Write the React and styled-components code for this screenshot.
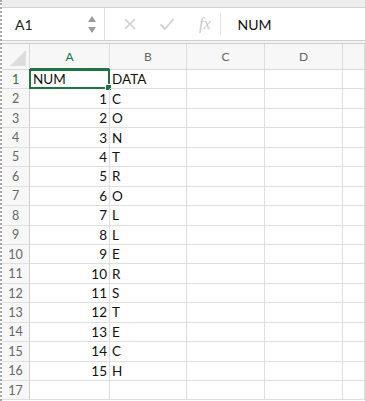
import React from "react"
import styled, { createGlobalStyle } from "styled-components"

const Global = createGlobalStyle`
  body {
    margin: 0;
    background: #fff;
    font-family: Lato, "Liberation Sans", sans-serif;
  }
`

const Frame = styled.div`
  width: 365px;
  height: 401px;
  overflow: hidden;
  display: flex;
  flex-direction: column;
  border-left: 2px dotted #a8a8a8;
  box-sizing: border-box;
  background: #fff;
`

const TopBand = styled.div`
  height: 7px;
  flex: none;
  background: #ededed;
  border-bottom: 1px solid #d4d4d4;
`

const FormulaBar = styled.div`
  height: 32px;
  flex: none;
  display: flex;
  align-items: center;
  background: #fff;
`

const NameBox = styled.div`
  width: 103px;
  height: 100%;
  box-sizing: border-box;
  display: flex;
  align-items: center;
  justify-content: space-between;
  padding: 0 8px 0 13px;
  border-right: 1px solid #dedede;
  font-size: 14px;
  color: #222;
`

const Spinner = styled.div`
  display: flex;
  flex-direction: column;
  gap: 5px;
  align-items: center;
`

const Arrow = styled.div`
  width: 0;
  height: 0;
  border-left: 4px solid transparent;
  border-right: 4px solid transparent;
  ${({ down }) =>
    down ? "border-top: 6px solid #9a9a9a;" : "border-bottom: 6px solid #9a9a9a;"}
`

const Tools = styled.div`
  display: flex;
  align-items: center;
  gap: 22px;
  padding: 0 10px 0 18px;
  height: 100%;
  color: #cfcfcf;
`

const Fx = styled.span`
  font-family: "Liberation Serif", serif;
  font-style: italic;
  font-size: 16px;
  color: #c8c8c8;
  padding: 0 9px 0 2px;
  border-right: 1px solid #e2e2e2;
  line-height: 22px;
`

const FormulaText = styled.div`
  padding-left: 7px;
  font-size: 14px;
  color: #111;
`

const Divider = styled.div`
  height: 2px;
  flex: none;
  border-top: 1px solid #cfcfcf;
  border-bottom: 1px solid #cfcfcf;
  background: #f4f4f4;
`

const Sheet = styled.div`
  display: grid;
  grid-template-columns: 28px 80px 77px 78px 78px 1fr;
  grid-template-rows: 26px repeat(17, 19.45px);
  flex: none;
`

const Corner = styled.div`
  position: relative;
  background: #f7f7f7;
  border-right: 1px solid #d8d8d8;
  border-bottom: 1px solid #d8d8d8;
  &::after {
    content: "";
    position: absolute;
    right: 3px;
    bottom: 3px;
    border-left: 16px solid transparent;
    border-bottom: 16px solid #dcdcdc;
  }
`

const ColHead = styled.div`
  display: flex;
  align-items: center;
  justify-content: center;
  background: #f7f7f7;
  border-right: 1px solid #dcdcdc;
  border-bottom: ${({ active }) => (active ? "2px solid #217346" : "1px solid #d8d8d8")};
  font-size: 12px;
  color: ${({ active }) => (active ? "#217346" : "#666")};
`

const RowHead = styled.div`
  display: flex;
  align-items: center;
  justify-content: center;
  background: #f7f7f7;
  border-right: 1px solid #d0d0d0;
  border-bottom: 1px solid #e0e0e0;
  font-size: 12.5px;
  color: ${({ active }) => (active ? "#217346" : "#666")};
`

const Cell = styled.div`
  position: relative;
  display: flex;
  align-items: center;
  justify-content: ${({ num }) => (num ? "flex-end" : "flex-start")};
  padding: 0 2px;
  border-right: 1px solid #dedede;
  border-bottom: 1px solid #dedede;
  font-size: 13.5px;
  color: #111;
  box-sizing: border-box;
  ${({ selected }) =>
    selected &&
    `
    border: 2px solid #217346;
    margin: -1px 0 0 -1px;
    &::after {
      content: "";
      position: absolute;
      right: -4px;
      bottom: -4px;
      width: 5px;
      height: 5px;
      background: #217346;
      border: 1px solid #fff;
    }
  `}
`

const letters = ["C", "O", "N", "T", "R", "O", "L", "L", "E", "R", "S", "T", "E", "C", "H"]
const cols = ["A", "B", "C", "D", ""]

const XIcon = () => (
  <svg width="14" height="14" viewBox="0 0 14 14">
    <path d="M2 2 L12 12 M12 2 L2 12" stroke="#cfcfcf" strokeWidth="1.6" fill="none" />
  </svg>
)

const CheckIcon = () => (
  <svg width="16" height="14" viewBox="0 0 16 14">
    <path d="M1.5 7.5 L6 12 L14.5 2" stroke="#cfcfcf" strokeWidth="1.8" fill="none" />
  </svg>
)

export default function App() {
  const rows = []
  for (let r = 1; r <= 17; r++) {
    let a = ""
    let b = ""
    if (r === 1) {
      a = "NUM"
      b = "DATA"
    } else if (r <= 16) {
      a = String(r - 1)
      b = letters[r - 2]
    }
    rows.push(
      <React.Fragment key={r}>
        <RowHead active={r === 1}>{r}</RowHead>
        <Cell num={r > 1} selected={r === 1}>{a}</Cell>
        <Cell>{b}</Cell>
        <Cell />
        <Cell />
        <Cell />
      </React.Fragment>
    )
  }

  return (
    <Frame>
      <Global />
      <TopBand />
      <FormulaBar>
        <NameBox>
          A1
          <Spinner>
            <Arrow />
            <Arrow down />
          </Spinner>
        </NameBox>
        <Tools>
          <XIcon />
          <CheckIcon />
          <Fx>fx</Fx>
        </Tools>
        <FormulaText>NUM</FormulaText>
      </FormulaBar>
      <Divider />
      <Sheet>
        <Corner />
        {cols.map((c, i) => (
          <ColHead key={i} active={c === "A"}>{c}</ColHead>
        ))}
        {rows}
      </Sheet>
    </Frame>
  )
}
